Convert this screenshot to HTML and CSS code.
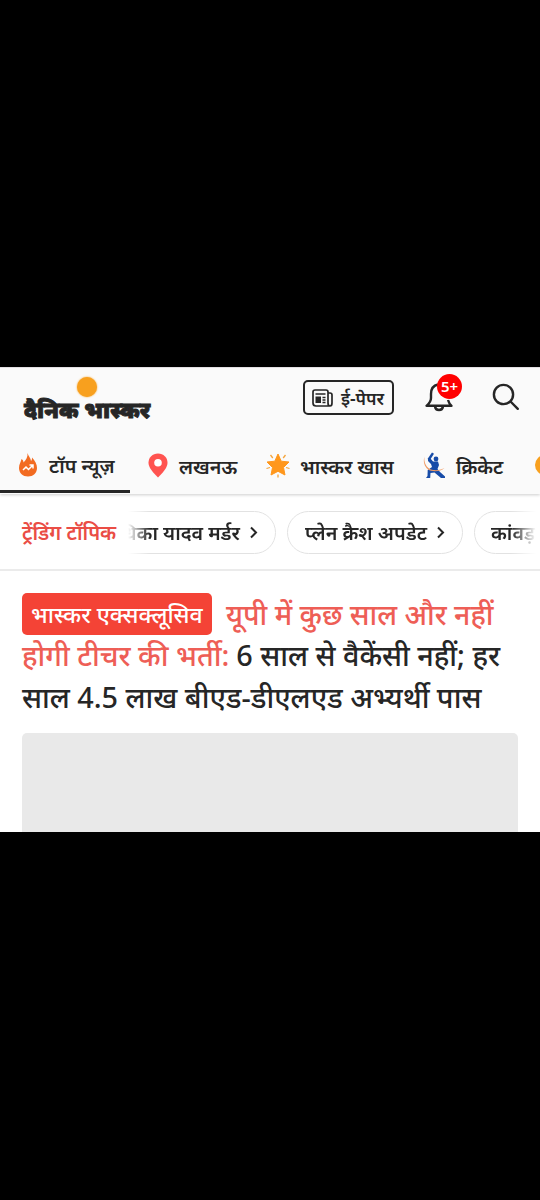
FILE: index.html
```html
<!DOCTYPE html>
<html lang="hi">
<head>
    <meta charset="UTF-8">
    <meta name="viewport" content="width=device-width, initial-scale=1.0">
    <title>दैनिक भास्कर</title>
    <link rel="stylesheet" href="styles.css">
</head>
<body>
    <div class="screen">
        <header class="header">
            <div class="topbar">
                <div class="logo">
                    <span class="logo-sun"></span>
                    <span class="logo-text">दैनिक भास्कर</span>
                </div>
                <div class="actions">
                    <a class="epaper">
                        <svg width="21" height="18" viewBox="0 0 21 18" fill="none" stroke="#262626" stroke-width="1.7">
                            <path d="M16 14V3Q16 1 14 1H3Q1 1 1 3V14Q1 17 4 17H18Q20 17 20 14V6Q20 4 18 4H16V14Q16 17 18 17"/>
                            <path d="M3.5 5H13.5M10.5 8.5H13.5M10.5 11H13.5M10.5 13.5H13.5" stroke-width="1.5"/>
                            <path d="M3.5 7.5H9V14H3.5Z" fill="#262626" stroke="none"/>
                        </svg>
                        <span>ई-पेपर</span>
                    </a>
                    <div class="bell">
                        <svg width="30" height="30" viewBox="0 0 30 30" fill="none" stroke="#262626" stroke-width="2.4">
                            <path d="M14 2.500C9 3.500 7 7 7 12V16Q7 20 2.500 23.800H27.500Q25 21.500 24 18" stroke-linejoin="round"/>
                            <path d="M11 24.500Q11.500 28 15 28T19 24.500"/>
                        </svg>
                        <span class="badge">5+</span>
                    </div>
                    <svg class="search" width="28" height="28" viewBox="0 0 28 28" fill="none" stroke="#262626" stroke-width="2.400" stroke-linecap="round">
                        <circle cx="11.500" cy="11.500" r="9.600"/>
                        <path d="M18.500 18.500L25.800 25.800"/>
                    </svg>
                </div>
            </div>
            <nav class="tabs">
                <a class="tab tab-top active">
                    <svg width="18" height="24" viewBox="0 0 18 24">
                        <path d="M8.500 0C9 3 12 5 12 8C13 7 13 6 13 4.500C16 8 18 11 18 15C18 20 14 23.500 9 23.500S0 20 0 15C0 11 2 9 2.500 6C4 7 4.500 8 4.500 9.500C7 7 9 4 8.500 0Z" fill="#f26b21"/>
                        <path d="M4 17L7 14L9.500 16.500L13.500 12.500M10.500 12H14V15.500" fill="none" stroke="#fff" stroke-width="1.500"/>
                    </svg>
                    <span>टॉप न्यूज़</span>
                </a>
                <a class="tab tab-city">
                    <svg width="20" height="25" viewBox="0 0 20 25">
                        <path d="M10 0.500C4.500 0.500 0.500 4.500 0.500 9.800C0.500 15 5.500 20 10 24.500C14.500 20 19.500 15 19.500 9.800C19.500 4.500 15.500 0.500 10 0.500Z" fill="#ff5350"/>
                        <circle cx="10" cy="9.800" r="3.800" fill="#fff"/>
                    </svg>
                    <span>लखनऊ</span>
                </a>
                <a class="tab tab-special">
                    <svg width="24" height="25" viewBox="0 0 24 25">
                        <path d="M12 1L15.200 8.200L23 9L17.500 14.500L19 22L12 18.300L5 22L6.500 14.500L1 9L8.800 8.200Z" fill="#ff971c" stroke="#ff971c" stroke-linejoin="round"/>
                        <path d="M4.500 2L6.800 5M19.500 2L17.200 5M0.500 15.500L4 14.500M23.500 15.500L20 14.500M12 21.500V24.500" stroke="#f5a53c" stroke-width="1.300"/>
                    </svg>
                    <span>भास्कर खास</span>
                </a>
                <a class="tab tab-cricket">
                    <svg width="23" height="27" viewBox="0 0 23 27">
                        <path d="M4.500 7L9 0.500L11 1.800L7 8Z" fill="#174ca8"/>
                        <circle cx="13" cy="7" r="2.400" fill="#174ca8"/>
                        <path d="M5 7L7.500 6.500L10 9.500L15 9.500L16 13L14.500 17L17 20L22 24.500V26H18L11.500 20.500L7.500 21L7.200 26H3L4.500 24L4.700 18L9 15L8 12L5 9Z" fill="#174ca8"/>
                        <path d="M1.500 4.500C0.500 11 4 17 10 18C15 18.600 19 17.500 21.500 16C18 19 13 20 8 18.800C2 17 -0.500 10 1.500 4.500Z" fill="#f09a62"/>
                    </svg>
                    <span>क्रिकेट</span>
                </a>
                <a class="tab tab-next"><span class="dot"></span></a>
            </nav>
        </header>

        <section class="trending">
            <span class="trending-title">ट्रेंडिंग टॉपिक</span>
            <div class="chips">
                <a class="chip chip-cut">
                    <span class="chip-text">राधिका यादव मर्डर</span>
                    <svg width="8" height="13" viewBox="0 0 8 13"><path d="M1 1.500L6 6.500L1 11.500"/></svg>
                </a>
                <a class="chip chip-plane">
                    <span class="chip-text">प्लेन क्रैश अपडेट</span>
                    <svg width="8" height="13" viewBox="0 0 8 13"><path d="M1 1.500L6 6.500L1 11.500"/></svg>
                </a>
                <a class="chip chip-last"><span class="chip-text">कांवड़</span></a>
            </div>
        </section>

        <article class="story">
            <h2 class="headline">
                <span class="line line-1"><span class="tag">भास्कर एक्सक्लूसिव</span><span class="red">यूपी में कुछ साल और नहीं</span></span>
                <span class="line line-2"><span class="red">होगी टीचर की भर्ती:</span> 6 साल से वैकेंसी नहीं; हर</span>
                <span class="line line-3">साल 4.5 लाख बीएड-डीएलएड अभ्यर्थी पास</span>
            </h2>
            <div class="thumb"></div>
        </article>
    </div>
</body>
</html>
```
FILE: styles.css
```css
* {
    box-sizing: border-box;
}
body {
    margin: 0;
    padding: 367px 0 0;
    height: 1200px;
    background: #000;
    color: #262626;
    font-family: "Noto Sans", "Noto Sans Devanagari", sans-serif;
    overflow: hidden;
}
svg {
    display: block;
    flex: none;
}
.screen {
    height: 465px;
    background: #fff;
    overflow: hidden;
}
.header {
    height: 127px;
    background: #fafafa;
    border-top: 1px solid #e2dfe2;
    box-shadow: 0 1px 3px rgba(0, 0, 0, 0.2);
}
.topbar {
    display: flex;
    justify-content: space-between;
    height: 72px;
    padding: 0 20px 0 24px;
}
.logo {
    display: flex;
    flex-direction: column;
    width: 130px;
    padding-top: 9px;
}
.logo-sun {
    width: 20px;
    height: 20px;
    margin-left: 53px;
    border-radius: 50%;
    background: #f8a01e;
    box-shadow: 0 0 2px #f8a01e;
}
.logo-text {
    margin-top: -2px;
    font-size: 22.5px;
    line-height: 30px;
    font-weight: 900;
    white-space: nowrap;
    -webkit-text-stroke: 0.9px #262626;
}
.actions {
    display: flex;
    align-items: flex-start;
}
.epaper {
    display: flex;
    align-items: center;
    gap: 8px;
    width: 91px;
    height: 35px;
    margin: 12px 30px 0 0;
    padding-left: 7px;
    border: 2px solid #262626;
    border-radius: 5px;
    font-size: 17.6px;
    font-weight: 600;
    white-space: nowrap;
}
.bell {
    position: relative;
    margin: 14px 38px 0 0;
}
.badge {
    position: absolute;
    left: 13px;
    top: -8px;
    width: 25px;
    height: 25px;
    border-radius: 50%;
    background: #f00;
    color: #fff;
    font-size: 15px;
    line-height: 25px;
    font-weight: 600;
    text-align: center;
}
.search {
    margin-top: 15px;
}
.tabs {
    display: flex;
    height: 54px;
    overflow: hidden;
}
.tab {
    display: flex;
    align-items: center;
    flex: none;
    height: 52px;
    font-size: 19.6px;
    font-weight: 600;
    white-space: nowrap;
}
.tab svg {
    margin-top: -2px;
}
.tab-top {
    width: 130px;
    padding-left: 19px;
    gap: 12px;
}
.tab.active {
    height: 53px;
    border-bottom: 3px solid #262626;
}
.tab.active svg {
    margin-top: -1px;
}
.tab-city {
    width: 136px;
    padding-left: 18px;
    gap: 11px;
}
.tab-special {
    width: 157px;
    gap: 10px;
}
.tab-cricket {
    width: 112px;
    gap: 10px;
}
.dot {
    width: 20px;
    height: 20px;
    margin-top: -2px;
    border-radius: 50%;
    background: #f8a01e;
}
.trending {
    display: flex;
    align-items: center;
    height: 77px;
    padding: 2px 4px 0 22px;
    border-bottom: 2px solid #ebebeb;
}
.trending-title {
    flex: none;
    width: 106px;
    color: #ea4d45;
    font-size: 20px;
    font-weight: 600;
    white-space: nowrap;
}
.chips {
    display: flex;
    gap: 11px;
    flex: 1;
    overflow: hidden;
    -webkit-mask-image: linear-gradient(to right, transparent, #000 22px, #000 calc(100% - 25px), transparent);
    mask-image: linear-gradient(to right, transparent, #000 22px, #000 calc(100% - 25px), transparent);
}
.chip {
    display: flex;
    align-items: center;
    justify-content: flex-end;
    flex: none;
    gap: 10px;
    height: 43px;
    padding: 0 17px;
    border: 1.500px solid #e2e2e2;
    border-radius: 22px;
    font-size: 19.7px;
    font-weight: 600;
    white-space: nowrap;
}
.chip svg {
    fill: none;
    stroke: #262626;
    stroke-width: 2;
}
.chip-cut {
    width: 190px;
    margin-left: -42px;
}
.chip-plane {
    width: 176px;
}
.chip-last {
    width: 120px;
    padding-left: 16px;
    justify-content: flex-start;
}
.story {
    padding: 21px 22px 0;
}
.headline {
    margin: 0;
    font-size: 28.8px;
    line-height: 42px;
    font-weight: 500;
}
.line {
    display: flex;
    align-items: center;
    height: 42px;
    gap: 7px;
    white-space: nowrap;
}
.line-1 {
    padding-top: 1px;
}
.red {
    color: #ee5e56;
}
.line-1 .red {
    font-size: 28.5px;
}
.tag {
    height: 42px;
    width: 190px;
    margin-right: 7px;
    padding-left: 9px;
    border-radius: 5px;
    background: #f44336;
    color: #fff;
    font-size: 23px;
}
.thumb {
    height: 110px;
    margin-top: 15px;
    border-radius: 5px;
    background: #e9e9e9;
}
```
